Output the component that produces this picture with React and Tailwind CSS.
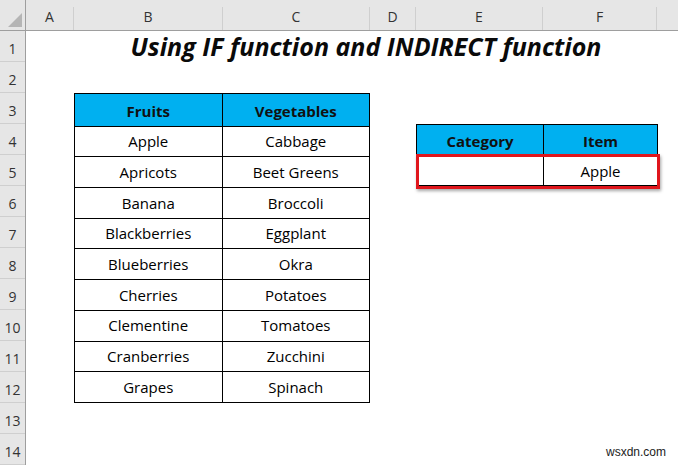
import React from "react";

const cols = ["A", "B", "C", "D", "E", "F", ""];
const data = [
  ["Apple", "Cabbage"],
  ["Apricots", "Beet Greens"],
  ["Banana", "Broccoli"],
  ["Blackberries", "Eggplant"],
  ["Blueberries", "Okra"],
  ["Cherries", "Potatoes"],
  ["Clementine", "Tomatoes"],
  ["Cranberries", "Zucchini"],
  ["Grapes", "Spinach"],
];

const font = { fontFamily: "'Open Sans', 'Liberation Sans', sans-serif" };

export default function App() {
  return (
    <div className="relative w-[678px] h-[465px] overflow-hidden bg-white text-black" style={font}>
      {/* column header */}
      <div className="flex h-[31px] bg-[#e6e6e6] border-b border-[#9e9e9e]">
        <div className="relative w-[26px] shrink-0 border-r border-[#9e9e9e]">
          <svg className="absolute right-[3px] bottom-[3px]" width="14" height="14" viewBox="0 0 14 14">
            <polygon points="14,0 14,14 0,14" fill="#b5b5b5" />
          </svg>
        </div>
        {cols.map((c, i) => (
          <div
            key={i}
            className={
              "flex items-end justify-center pb-[3px] text-[14px] text-[#333] border-r border-[#cfcfcf] mt-[7px] " +
              ["w-[48px]", "w-[149px]", "w-[147px]", "w-[46px]", "w-[127px]", "w-[114px]", "flex-1 border-r-0"][i]
            }
          >
            {c}
          </div>
        ))}
      </div>

      <div className="flex">
        {/* row headers */}
        <div className="w-[26px] shrink-0 bg-[#e6e6e6] border-r border-[#9e9e9e]">
          {Array.from({ length: 14 }, (_, i) => (
            <div
              key={i}
              className="h-[31px] flex items-center justify-center pt-[4px] text-[14px] text-[#333] border-b border-[#cfcfcf]"
            >
              {i + 1}
            </div>
          ))}
        </div>

        {/* sheet area */}
        <div className="flex-1 grid grid-cols-[48px_149px_147px_46px_127px_115px_1fr] grid-rows-[repeat(14,31px)]">
          {/* title */}
          <div className="col-start-2 col-end-7 row-start-1 flex items-center justify-center pt-[1px]">
            <span className="text-[25px] font-bold italic text-[#0a0a0a] whitespace-nowrap">
              Using IF function and INDIRECT function
            </span>
          </div>

          {/* main table */}
          <div className="col-start-2 col-end-4 row-start-3 row-end-13 border border-black grid grid-cols-2 bg-black gap-px">
            <div className="bg-[#00b0f0] flex items-center justify-center pt-[2px] font-bold text-[15px] text-[#111]">Fruits</div>
            <div className="bg-[#00b0f0] flex items-center justify-center pt-[2px] font-bold text-[15px] text-[#111]">Vegetables</div>
            {data.map(([a, b], i) => (
              <React.Fragment key={i}>
                <div className="bg-white flex items-center justify-center text-[15px]">{a}</div>
                <div className="bg-white flex items-center justify-center text-[15px]">{b}</div>
              </React.Fragment>
            ))}
          </div>

          {/* second table */}
          <div className="relative col-start-5 col-end-7 row-start-4 row-end-6 border border-black grid grid-cols-[126px_1fr] bg-black gap-px">
            <div className="bg-[#00b0f0] flex items-center justify-center pt-[2px] font-bold text-[15px] text-[#111]">Category</div>
            <div className="bg-[#00b0f0] flex items-center justify-center pt-[2px] font-bold text-[15px] text-[#111]">Item</div>
            <div className="bg-white"></div>
            <div className="bg-white flex items-center justify-center text-[15px]">Apple</div>
            <div className="absolute left-[-1px] right-[-3px] top-[29px] h-[35px] border-[3px] border-[#e0161c] shadow-[1px_2px_3px_rgba(0,0,0,0.35)]"></div>
          </div>
        </div>
      </div>

      <div
        className="absolute right-[12px] bottom-[4px] text-[12px] text-[#222]"
        style={{ fontFamily: "'Liberation Sans', Arial, sans-serif" }}
      >
        wsxdn.com
      </div>
    </div>
  );
}
